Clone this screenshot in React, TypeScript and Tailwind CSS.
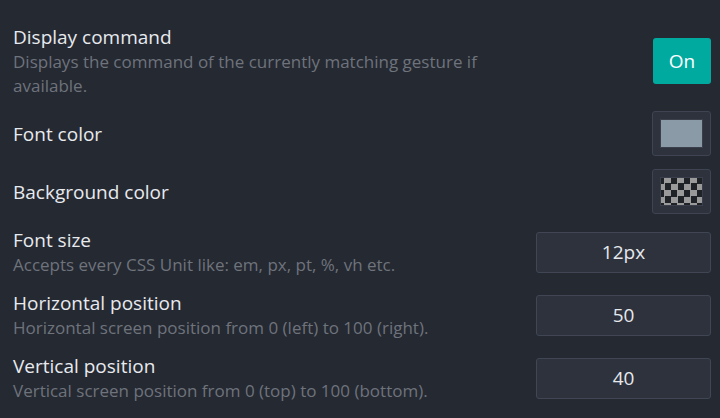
import { useState } from "react";

type Setting = {
  title: string;
  description?: string;
  control: React.ReactNode;
};

function ValueInput({ value }: { value: string }) {
  const [v, setV] = useState(value);
  return (
    <input
      value={v}
      onChange={(e) => setV(e.target.value)}
      className="w-[175px] h-[41px] rounded-[3px] border border-[#404654] bg-[#2d323d] text-center text-[19px] text-[#e6e8ec] outline-none"
    />
  );
}

function ColorSwatch({ checker }: { checker?: boolean }) {
  return (
    <button className="w-[59px] h-[45px] rounded-[3px] border border-[#3e4452] bg-[#2d323d] p-[7px] flex">
      {checker ? (
        <div className="flex-1 border border-[#3a3f4b] bg-[#1f2227] bg-[conic-gradient(#9a9a9a_25%,#1f2227_0_50%,#9a9a9a_0_75%,#1f2227_0)] bg-[length:13px_13px] bg-[position:-3px_-1px]" />
      ) : (
        <div className="flex-1 border border-[#3a3f4b] bg-[#8a9ba7]" />
      )}
    </button>
  );
}

export default function App() {
  const [on, setOn] = useState(true);

  const settings: Setting[] = [
    {
      title: "Display command",
      description:
        "Displays the command of the currently matching gesture if available.",
      control: (
        <button
          onClick={() => setOn(!on)}
          className="w-[58px] h-[46px] rounded-[3px] bg-[#00aa9f] text-[19px] text-white"
        >
          {on ? "On" : "Off"}
        </button>
      ),
    },
    { title: "Font color", control: <ColorSwatch /> },
    { title: "Background color", control: <ColorSwatch checker /> },
    {
      title: "Font size",
      description: "Accepts every CSS Unit like: em, px, pt, %, vh etc.",
      control: <ValueInput value="12px" />,
    },
    {
      title: "Horizontal position",
      description: "Horizontal screen position from 0 (left) to 100 (right).",
      control: <ValueInput value="50" />,
    },
    {
      title: "Vertical position",
      description: "Vertical screen position from 0 (top) to 100 (bottom).",
      control: <ValueInput value="40" />,
    },
  ];

  return (
    <div className="w-[720px] h-[418px] overflow-hidden bg-[#252932] font-['Open_Sans',sans-serif] pl-[13px] pr-[9px] pt-[24px] flex flex-col gap-[13px]">
      {settings.map((s) => (
        <div key={s.title} className="flex items-center justify-between">
          <div className="w-[490px]">
            <div className="text-[19px] leading-[26px] text-[#e8eaee]">{s.title}</div>
            {s.description && (
              <div className="text-[17px] leading-[24px] text-[#6e737c]">
                {s.description}
              </div>
            )}
          </div>
          {s.control}
        </div>
      ))}
    </div>
  );
}
